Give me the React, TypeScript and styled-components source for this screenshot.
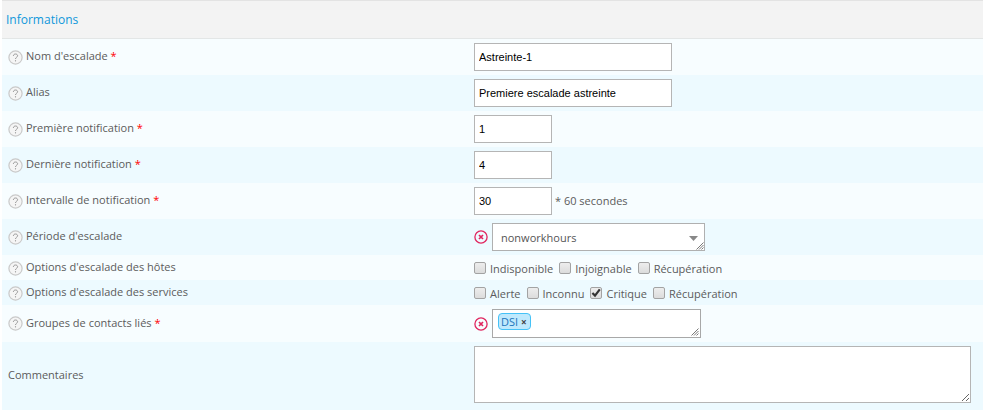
import React, { useState } from "react";
import styled, { createGlobalStyle } from "styled-components";

const GlobalStyle = createGlobalStyle`
  *, *::before, *::after { box-sizing: border-box; }
  body {
    margin: 0;
    background: #fff;
    color: #5b5b5b;
    font: 11px/16px "Open Sans", sans-serif;
  }
`;

const Form = styled.form`
  margin-left: 2px;
`;

const Header = styled.h1`
  margin: 0;
  padding: 10px 4px;
  border-top: 1px solid #e3e3e3;
  border-bottom: 1px solid #e3e6e6;
  background: #f3f3f3;
  color: #1098db;
  font-size: 12px;
  font-weight: 400;
  line-height: 17px;
`;

const Row = styled.div<{ $compact?: boolean }>`
  display: grid;
  grid-template-columns: 472px minmax(0, 1fr);
  align-items: center;
  padding: ${(p) => (p.$compact ? "4px 0 3px" : "4px 0")};
  background: #f7fdff;
  &:nth-child(odd) { background: #edfaff; }
`;

const LabelCell = styled.div`
  display: flex;
  align-items: center;
  gap: 3px;
  padding-left: 6px;
`;

const LabelText = styled.label`
  padding-bottom: 2px;
`;

const Required = styled.span`
  color: #f00;
`;

const HelpButton = styled.button`
  display: flex;
  margin: 0;
  padding: 0;
  border: 0;
  background: none;
`;

const Controls = styled.div`
  display: flex;
  align-items: center;
  gap: 3px;
  padding-right: 12px;
`;

const CommentControls = styled(Controls)`
  padding-bottom: 3px;
`;

const TextInput = styled.input<{ $short?: boolean }>`
  width: ${(p) => (p.$short ? 78 : 198)}px;
  height: 28px;
  margin: 0;
  padding: 0 4px;
  border: 1px solid #b5b5b5;
  border-radius: 0;
  background: #fff;
  color: #000;
  font: 11px "Liberation Sans", sans-serif;
`;

const ClearButton = styled.button`
  display: flex;
  margin: 0 1px 0 0;
  padding: 0;
  border: 0;
  background: none;
`;

const SelectBox = styled.div`
  position: relative;
  width: 213px;
`;

const Select = styled.select`
  display: block;
  width: 100%;
  height: 28px;
  padding: 0 24px 0 8px;
  border: 1px solid #b0b0b0;
  border-radius: 0;
  appearance: none;
  background: #fff;
  color: #555;
  font: 11px "Open Sans", sans-serif;
`;

const Arrow = styled.svg`
  position: absolute;
  right: 7px;
  top: 13px;
  pointer-events: none;
`;

const GripSvg = styled.svg`
  position: absolute;
  right: 1px;
  bottom: 1px;
  pointer-events: none;
`;

const TagBox = styled.div`
  position: relative;
  width: 209px;
  height: 29px;
  padding: 3px 5px;
  border: 1px solid #a8a8a8;
  background: #fff;
`;

const Tag = styled.span`
  display: flex;
  align-items: center;
  width: max-content;
  height: 17px;
  padding: 0 3px 0 2px;
  border: 1px solid #45c2f7;
  border-radius: 4px;
  background: #bfe9fd;
  color: #1b75bb;
`;

const TagRemove = styled.button`
  margin: 0 0 0 3px;
  padding: 0;
  border: 0;
  background: none;
  color: #444;
  font: bold 10px/14px "Open Sans", sans-serif;
`;

const Option = styled.label`
  display: flex;
  align-items: center;
  gap: 4px;
  margin-right: 3px;
`;

const OptionText = styled.span`
  padding-top: 1px;
`;

const CheckWrap = styled.span`
  display: grid;
  place-items: center;
  & > * { grid-area: 1 / 1; }
`;

const Check = styled.input`
  width: 12px;
  height: 12px;
  margin: 0;
  border: 1px solid #a3a3a3;
  border-radius: 2px;
  appearance: none;
  background: linear-gradient(#ededed, #dcdcdc);
`;

const Mark = styled.svg`
  pointer-events: none;
`;

const Comments = styled.textarea`
  display: block;
  width: 100%;
  height: 57px;
  margin: 0;
  padding: 4px;
  border: 1px solid #b5b5b5;
  border-radius: 0;
  background: #fff;
  font: 11px "Liberation Sans", sans-serif;
`;

function Help({ topic }: { topic: string }) {
  return (
    <HelpButton type="button" aria-label={`Aide : ${topic}`}>
      <svg width="15" height="15" viewBox="0 0 15 15" fill="none">
        <circle cx="7.5" cy="7.5" r="6.6" fill="#f5f5f5" stroke="#c9c9c9" strokeWidth="1.2" />
        <path d="M5.4 6C5.4 4.7 6.3 4 7.5 4S9.6 4.7 9.6 5.8C9.6 7.2 7.5 7.3 7.5 9" stroke="#999" strokeWidth="1" />
        <path d="M7.5 10.2V11.4" stroke="#999" strokeWidth="1.1" />
      </svg>
    </HelpButton>
  );
}

function Clear({ label, onClick }: { label: string; onClick: () => void }) {
  return (
    <ClearButton type="button" aria-label={label} onClick={onClick}>
      <svg width="14" height="14" viewBox="0 0 14 14" fill="none" stroke="#e0265f">
        <circle cx="7" cy="7" r="6.1" strokeWidth="1.3" />
        <path d="M5 5L9 9M9 5L5 9" strokeWidth="1.7" />
      </svg>
    </ClearButton>
  );
}

function Grip() {
  return (
    <GripSvg width="8" height="8" viewBox="0 0 8 8" stroke="#777" strokeWidth="1">
      <path d="M0.5 7.5L7.5 0.5M3 7.5L7.5 3M5.5 7.5L7.5 5.5" />
    </GripSvg>
  );
}

function FieldLabel({ id, text, required, help = true, group }: {
  id: string; text: string; required?: boolean; help?: boolean; group?: boolean;
}) {
  const target = group ? { as: "span" as const, id } : { htmlFor: id };
  return (
    <LabelCell>
      {help && <Help topic={text} />}
      <LabelText {...target}>
        {text}
        {required && <Required> *</Required>}
      </LabelText>
    </LabelCell>
  );
}

function CheckOption({ label, on }: { label: string; on?: boolean }) {
  const [checked, setChecked] = useState(!!on);
  return (
    <Option>
      <CheckWrap>
        <Check type="checkbox" checked={checked} onChange={() => setChecked(!checked)} />
        {checked && (
          <Mark width="12" height="12" viewBox="0 0 12 12" fill="none" stroke="#333" strokeWidth="2.2">
            <path d="M2.4 6L5 8.6L9.8 2.4" />
          </Mark>
        )}
      </CheckWrap>
      <OptionText>{label}</OptionText>
    </Option>
  );
}

const textFields = [
  { id: "name", label: "Nom d'escalade", value: "Astreinte-1", required: true },
  { id: "alias", label: "Alias", value: "Premiere escalade astreinte" },
  { id: "first", label: "Première notification", value: "1", required: true, short: true },
  { id: "last", label: "Dernière notification", value: "4", required: true, short: true },
  { id: "interval", label: "Intervalle de notification", value: "30", required: true, short: true, suffix: "* 60 secondes" },
];

const optionRows = [
  { id: "hosts", label: "Options d'escalade des hôtes", options: ["Indisponible", "Injoignable", "Récupération"] },
  { id: "services", label: "Options d'escalade des services", options: ["Alerte", "Inconnu", "Critique", "Récupération"] },
];

export default function App() {
  const [period, setPeriod] = useState("nonworkhours");
  const [groups, setGroups] = useState(["DSI"]);
  return (
    <>
      <GlobalStyle />
      <Form>
        <Header>Informations</Header>
        {textFields.map((f) => (
          <Row key={f.id}>
            <FieldLabel id={f.id} text={f.label} required={f.required} />
            <Controls>
              <TextInput id={f.id} type="text" defaultValue={f.value} $short={f.short} />
              {f.suffix && <span>{f.suffix}</span>}
            </Controls>
          </Row>
        ))}
        <Row>
          <FieldLabel id="period" text="Période d'escalade" />
          <Controls>
            <Clear label="Effacer la période" onClick={() => setPeriod("")} />
            <SelectBox>
              <Select id="period" value={period} onChange={(e) => setPeriod(e.target.value)}>
                <option value="" />
                <option value="nonworkhours">nonworkhours</option>
              </Select>
              <Arrow width="9" height="5" viewBox="0 0 9 5">
                <path d="M0 0H9L4.5 5Z" fill="#888" />
              </Arrow>
              <Grip />
            </SelectBox>
          </Controls>
        </Row>
        {optionRows.map((r) => (
          <Row key={r.id} $compact>
            <FieldLabel id={r.id} text={r.label} group />
            <Controls role="group" aria-labelledby={r.id}>
              {r.options.map((o) => (
                <CheckOption key={o} label={o} on={o === "Critique"} />
              ))}
            </Controls>
          </Row>
        ))}
        <Row>
          <FieldLabel id="groups" text="Groupes de contacts liés" required group />
          <Controls role="group" aria-labelledby="groups">
            <Clear label="Effacer les groupes" onClick={() => setGroups([])} />
            <TagBox>
              {groups.map((g) => (
                <Tag key={g}>
                  {g}
                  <TagRemove
                    type="button"
                    aria-label={`Retirer ${g}`}
                    onClick={() => setGroups(groups.filter((x) => x !== g))}
                  >
                    ×
                  </TagRemove>
                </Tag>
              ))}
              <Grip />
            </TagBox>
          </Controls>
        </Row>
        <Row>
          <FieldLabel id="comments" text="Commentaires" help={false} />
          <CommentControls>
            <Comments id="comments" />
          </CommentControls>
        </Row>
      </Form>
    </>
  );
}
